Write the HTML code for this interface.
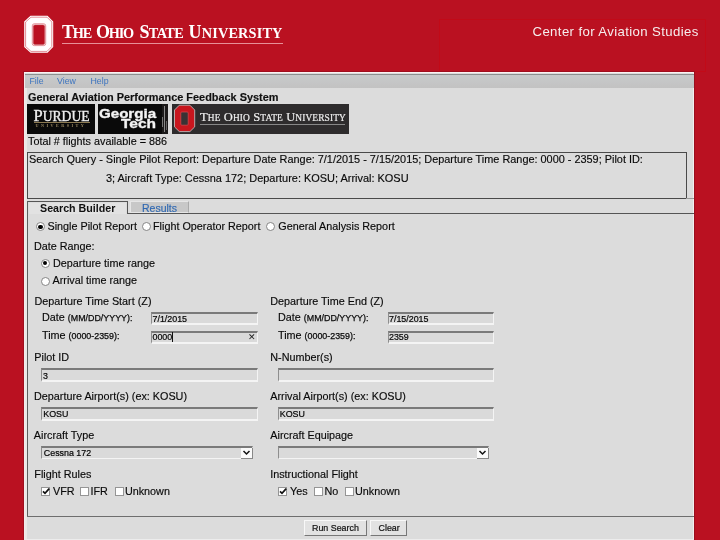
<!DOCTYPE html>
<html><head><meta charset="utf-8">
<style>
*{margin:0;padding:0;box-sizing:border-box}
html,body{width:720px;height:540px;overflow:hidden;background:#BA1121;font-family:"Liberation Sans",sans-serif}
#w{position:absolute;left:0;top:0;width:720px;height:540px;will-change:transform}
.a{position:absolute;white-space:nowrap}
.t{position:absolute;margin-top:-0.6px;white-space:nowrap;font-size:10.8px;line-height:12px;color:#0a0a0a;-webkit-text-stroke:0.15px #0a0a0a}
.inp{position:absolute;background:#DADADA;border-top:2px solid #7a7a7a;border-left:1px solid #8e8e8e;border-right:1px solid #f4f4f4;border-bottom:2px solid #f4f4f4}
.it{position:absolute;font-size:8.9px;line-height:10px;color:#050505;white-space:nowrap;-webkit-text-stroke:0.2px #050505}
.rad{position:absolute;width:9px;height:9px;border-radius:50%;background:#fff;border:1px solid #858585}
.rad.on::after{content:"";position:absolute;left:1.25px;top:1.25px;width:4.5px;height:4.5px;border-radius:50%;background:#000}
.cb{position:absolute;width:9px;height:9px;background:#fff;border:1px solid #959595}
.sm{font-size:8.9px;-webkit-text-stroke:0.25px #0a0a0a}
</style></head><body><div id="w">

<!-- header block O -->
<svg class="a" style="left:22px;top:14px" width="34" height="41" viewBox="0 0 34 41">
  <polygon points="8.5,1.8 25.5,1.8 31.2,7.5 31.2,33 25.5,38.8 8.5,38.8 2.2,33 2.2,7.5" fill="#fff"/>
  <polygon points="9,3.2 25,3.2 29.8,8 29.8,32.5 25,37.4 9,37.4 3.6,32.5 3.6,8" fill="none" stroke="#d5606a" stroke-width="0.7"/>
  <rect x="10.3" y="9.8" width="13.4" height="21.8" rx="2" fill="none" stroke="#d5606a" stroke-width="0.7"/>
  <rect x="11.4" y="11" width="11.2" height="19.4" rx="1.5" fill="#BA1121" stroke="#c23a44" stroke-width="0.6"/>
</svg>
<div class="a" style="left:62px;top:22px;font-family:'Liberation Serif',serif;font-weight:bold;color:#fff;font-size:18px;line-height:20px;letter-spacing:-1.2px">T<span style="font-size:14.3px">HE</span></div>
<div class="a" style="left:96px;top:22px;font-family:'Liberation Serif',serif;font-weight:bold;color:#fff;font-size:18px;line-height:20px;letter-spacing:-1.25px">O<span style="font-size:14.3px">HIO</span></div>
<div class="a" style="left:139.4px;top:22px;font-family:'Liberation Serif',serif;font-weight:bold;color:#fff;font-size:18px;line-height:20px;letter-spacing:-0.6px">S<span style="font-size:14.3px">TATE</span></div>
<div class="a" style="left:188.6px;top:22px;font-family:'Liberation Serif',serif;font-weight:bold;color:#fff;font-size:18px;line-height:20px;letter-spacing:0.15px">U<span style="font-size:14.3px">NIVERSITY</span></div>
<div class="a" style="left:62px;top:43px;width:221px;height:1px;background:#e89098"></div>

<!-- center box -->
<div class="a" style="left:439px;top:19px;width:267px;height:53px;border:1px solid #C20A18"></div>
<div class="a" style="left:532.5px;top:24px;color:#f6eeee;font-size:13.2px;line-height:15px;letter-spacing:0.38px">Center for Aviation Studies</div>

<!-- screenshot -->
<div class="a" style="left:24px;top:71px;width:670px;height:1px;background:#A00E1E"></div>
<div class="a" style="left:24px;top:72px;width:670px;height:468px;background:#DCDCDC;border-top:1.5px solid #fbf2f2;border-left:1px solid #f4eaea;border-right:0.5px solid #f4eaea"></div>
<div class="a" style="left:23px;top:71px;width:1px;height:469px;background:#A00E1E"></div>
<div class="a" style="left:694px;top:71px;width:1px;height:469px;background:#9A0E1E"></div>
<div class="a" style="left:25px;top:88px;width:2px;height:451px;background:#ECE8E6"></div>
<div class="a" style="left:692.5px;top:88px;width:1.5px;height:451px;background:#F4EEEE"></div>
<div class="a" style="left:25px;top:73.5px;width:668.5px;height:14px;background:linear-gradient(#C8CACB,#C2C2C2);border-top:1px solid #8c8f8f"></div>
<div class="a" style="left:29.5px;top:76px;font-size:8.8px;line-height:10px;color:#3D74BF">File</div>
<div class="a" style="left:57px;top:76px;font-size:8.8px;line-height:10px;color:#3D74BF">View</div>
<div class="a" style="left:90.5px;top:76px;font-size:8.8px;line-height:10px;color:#3D74BF">Help</div>

<div class="t" style="left:28px;top:92px;font-weight:bold;color:#111;font-size:10.9px">General Aviation Performance Feedback System</div>

<!-- logos -->
<div class="a" style="left:27px;top:104px;width:68px;height:29.5px;background:#0a0a0a"></div>
<div class="a" style="left:33.5px;top:107px;font-family:'Liberation Serif',serif;color:#eee;-webkit-text-stroke:0.35px #eee;font-size:16.5px;line-height:18px">P<span style="font-size:13.6px">URDUE</span></div>
<div class="a" style="left:34px;top:122px;width:56px;height:1px;background:#8c7a52"></div>
<div class="a" style="left:35.5px;top:124px;font-family:'Liberation Serif',serif;color:#9a8860;font-size:4.2px;line-height:4px;letter-spacing:2.45px;font-weight:bold">UNIVERSITY</div>

<div class="a" style="left:98px;top:104px;width:70px;height:29.5px;background:#0a0a0a"></div>
<div class="a" style="left:99.3px;top:107px;color:#f4f4f4;font-weight:bold;font-size:12.8px;line-height:14px;transform:scaleX(1.18);transform-origin:0 0;-webkit-text-stroke:0.35px #f4f4f4">Georgia</div>
<div class="a" style="left:120.7px;top:117.4px;color:#f4f4f4;font-weight:bold;font-size:13.4px;line-height:14px;transform:scaleX(1.16);transform-origin:0 0;-webkit-text-stroke:0.35px #f4f4f4">Tech</div>
<div class="a" style="left:162px;top:104px;width:6px;height:29.5px;background:#1c1a1a"></div>
<div class="a" style="left:163.5px;top:106px;width:1px;height:26px;background:#8a8a8a"></div>
<div class="a" style="left:161.5px;top:117px;width:1px;height:10px;background:#777"></div>
<div class="a" style="left:165.5px;top:121px;width:1px;height:9px;background:#666"></div>
<div class="a" style="left:172px;top:104px;width:176.5px;height:29.5px;background:#2E2C2D"></div>
<svg class="a" style="left:173px;top:104px" width="23" height="29" viewBox="0 0 23 29">
  <polygon points="6.3,1.2 16.9,1.2 21.7,6 21.7,22.9 16.9,27.6 6.3,27.6 1.5,22.9 1.5,6" fill="#C8161E" stroke="#c0b8b8" stroke-width="0.9"/>
  <rect x="7.8" y="8" width="7.4" height="13.2" rx="1" fill="#3a3234" stroke="#e04a50" stroke-width="0.7"/>
</svg>
<div class="a" style="left:200px;top:109.5px;font-family:'Liberation Serif',serif;color:#eee;-webkit-text-stroke:0.2px #eee;font-size:12.5px;line-height:14px;letter-spacing:0.12px">T<span style="font-size:9.4px">HE</span> O<span style="font-size:9.4px">HIO</span> S<span style="font-size:9.4px">TATE</span> U<span style="font-size:9.4px">NIVERSITY</span></div>
<div class="a" style="left:200px;top:124px;width:145px;height:1px;background:#888"></div>

<div class="t" style="left:28px;top:136px">Total # flights available = 886</div>

<!-- query box -->
<div class="a" style="left:27px;top:151.5px;width:659.5px;height:47px;border:1.5px solid #4a4a4a"></div>
<div class="t" style="left:29px;top:154px;font-size:10.9px">Search Query - Single Pilot Report: Departure Date Range: 7/1/2015 - 7/15/2015; Departure Time Range: 0000 - 2359; Pilot ID:</div>
<div class="t" style="left:106px;top:172.5px;font-size:10.95px">3; Aircraft Type: Cessna 172; Departure: KOSU; Arrival: KOSU</div>
<div class="a" style="left:686px;top:198px;width:8px;height:1px;background:#9a9a9a"></div>

<!-- tabs -->
<div class="a" style="left:127px;top:212.5px;width:567px;height:1.5px;background:#555"></div>
<div class="a" style="left:130px;top:201px;width:59px;height:12px;background:#C8C8C8;border:1px solid #e6e6e6;border-right-color:#aaa"></div>
<div class="a" style="left:142px;top:201.5px;font-size:10.5px;line-height:12px;color:#2F68B2;-webkit-text-stroke:0.15px #2F68B2">Results</div>
<div class="a" style="left:27px;top:201px;width:100.5px;height:13px;border-top:1.5px solid #555;border-right:1.5px solid #555"></div>
<div class="a" style="left:27px;top:201px;width:1.4px;height:315.5px;background:#5e5e5e"></div>
<div class="a" style="left:27px;top:515.5px;width:667px;height:1.3px;background:#6e6e6e"></div>
<div class="a" style="left:25px;top:539px;width:669px;height:1px;background:#ececec"></div>
<div class="a" style="left:28.5px;top:202.5px;width:97.5px;height:11px;background:#E2E2E2"></div>
<div class="a" style="left:40px;top:201.5px;font-size:10.7px;line-height:12px;font-weight:bold;color:#111">Search Builder</div>

<!-- report type radios -->
<div class="rad on" style="left:36px;top:222.3px"></div>
<div class="t" style="left:47.5px;top:221px">Single Pilot Report</div>
<div class="rad" style="left:141.5px;top:222px"></div>
<div class="t" style="left:153px;top:221px">Flight Operator Report</div>
<div class="rad" style="left:266px;top:222px"></div>
<div class="t" style="left:278.3px;top:221px">General Analysis Report</div>

<div class="t" style="left:34px;top:240.5px">Date Range:</div>
<div class="rad on" style="left:40.5px;top:258.5px"></div>
<div class="t" style="left:53px;top:257.5px">Departure time range</div>
<div class="rad" style="left:41px;top:276.5px"></div>
<div class="t" style="left:52.5px;top:275px">Arrival time range</div>

<!-- time start/end -->
<div class="t" style="left:34.5px;top:295.5px">Departure Time Start (Z)</div>
<div class="t" style="left:42px;top:311.5px">Date <span class="sm">(MM/DD/YYYY):</span></div>
<div class="t" style="left:42px;top:329.5px">Time <span class="sm">(0000-2359):</span></div>
<div class="inp" style="left:151px;top:312px;width:106.5px;height:13px"></div>
<div class="it" style="left:152.5px;top:313.5px">7/1/2015</div>
<div class="inp" style="left:151px;top:330.5px;width:106.5px;height:13.5px"></div>
<div class="it" style="left:152.5px;top:332px">0000</div>
<div class="a" style="left:172.3px;top:332px;width:1px;height:10px;background:#111"></div>
<div class="a" style="left:248px;top:330.5px;font-size:8.5px;line-height:13px;color:#222">&#x2715;</div>

<div class="t" style="left:270.3px;top:295.5px">Departure Time End (Z)</div>
<div class="t" style="left:278px;top:311.5px">Date <span class="sm">(MM/DD/YYYY):</span></div>
<div class="t" style="left:278px;top:329.5px">Time <span class="sm">(0000-2359):</span></div>
<div class="inp" style="left:387.5px;top:312px;width:106.5px;height:13px"></div>
<div class="it" style="left:389px;top:313.5px">7/15/2015</div>
<div class="inp" style="left:387.5px;top:330.5px;width:106.5px;height:13.5px"></div>
<div class="it" style="left:389px;top:332px">2359</div>

<!-- pilot id / n-number -->
<div class="t" style="left:34.3px;top:351.5px">Pilot ID</div>
<div class="inp" style="left:41.3px;top:368px;width:217px;height:14px"></div>
<div class="it" style="left:43px;top:370.5px">3</div>
<div class="t" style="left:270.3px;top:351.5px">N-Number(s)</div>
<div class="inp" style="left:277.8px;top:368px;width:216.6px;height:14px"></div>

<!-- airports -->
<div class="t" style="left:34px;top:390.5px">Departure Airport(s) (ex: KOSU)</div>
<div class="inp" style="left:41.3px;top:407px;width:217px;height:14px"></div>
<div class="it" style="left:43.3px;top:409px">KOSU</div>
<div class="t" style="left:270.3px;top:390.5px">Arrival Airport(s) (ex: KOSU)</div>
<div class="inp" style="left:277.8px;top:407px;width:216.6px;height:14px"></div>
<div class="it" style="left:279.8px;top:409px">KOSU</div>

<!-- aircraft type / equipage -->
<div class="t" style="left:33.8px;top:429.5px">Aircraft Type</div>
<div class="inp" style="left:41px;top:446px;width:212px;height:13px;border-bottom-width:1px"></div>
<div class="it" style="left:43.8px;top:448px">Cessna 172</div>
<div class="a" style="left:240.5px;top:447.5px;width:12px;height:11px;background:#fafafa;border-right:1px solid #888;border-bottom:1px solid #888"></div>
<svg class="a" style="left:242px;top:449px" width="9" height="7" viewBox="0 0 9 7"><polyline points="1.5,2 4.5,5 7.5,2" fill="none" stroke="#111" stroke-width="1.5"/></svg>

<div class="t" style="left:270.3px;top:429.5px">Aircraft Equipage</div>
<div class="inp" style="left:277.5px;top:446px;width:211.5px;height:13px;border-bottom-width:1px"></div>
<div class="a" style="left:476.5px;top:447.5px;width:12px;height:11px;background:#fafafa;border-right:1px solid #888;border-bottom:1px solid #888"></div>
<svg class="a" style="left:478px;top:449px" width="9" height="7" viewBox="0 0 9 7"><polyline points="1.5,2 4.5,5 7.5,2" fill="none" stroke="#111" stroke-width="1.5"/></svg>

<!-- flight rules -->
<div class="t" style="left:34.3px;top:469px">Flight Rules</div>
<div class="cb" style="left:41.2px;top:487px"></div>
<svg class="a" style="left:42px;top:486.5px" width="9" height="9" viewBox="0 0 9 9"><polyline points="1,4.3 3,6.3 7.2,1.6" fill="none" stroke="#111" stroke-width="1.7"/></svg>
<div class="t" style="left:53px;top:486px">VFR</div>
<div class="cb" style="left:80px;top:487px"></div>
<div class="t" style="left:90.5px;top:486px">IFR</div>
<div class="cb" style="left:114.5px;top:487px"></div>
<div class="t" style="left:124.9px;top:486px">Unknown</div>

<div class="t" style="left:270.2px;top:469px">Instructional Flight</div>
<div class="cb" style="left:278.2px;top:487px"></div>
<svg class="a" style="left:279px;top:486.5px" width="9" height="9" viewBox="0 0 9 9"><polyline points="1,4.3 3,6.3 7.2,1.6" fill="none" stroke="#111" stroke-width="1.7"/></svg>
<div class="t" style="left:290px;top:486px">Yes</div>
<div class="cb" style="left:314.4px;top:487px"></div>
<div class="t" style="left:324.4px;top:486px">No</div>
<div class="cb" style="left:344.8px;top:487px"></div>
<div class="t" style="left:355px;top:486px">Unknown</div>

<!-- buttons -->
<div class="a" style="left:304px;top:520px;width:63px;height:16px;background:#E2E2E2;border:1px solid #f8f8f8;border-right-color:#777;border-bottom-color:#777"></div>
<div class="a" style="left:312px;top:523px;font-size:8.9px;line-height:11px;color:#111;-webkit-text-stroke:0.2px #111">Run Search</div>
<div class="a" style="left:370.3px;top:520px;width:37px;height:16px;background:#E2E2E2;border:1px solid #f8f8f8;border-right-color:#777;border-bottom-color:#777"></div>
<div class="a" style="left:378.5px;top:523px;font-size:8.9px;line-height:11px;color:#111;-webkit-text-stroke:0.2px #111">Clear</div>

</div></body></html>
